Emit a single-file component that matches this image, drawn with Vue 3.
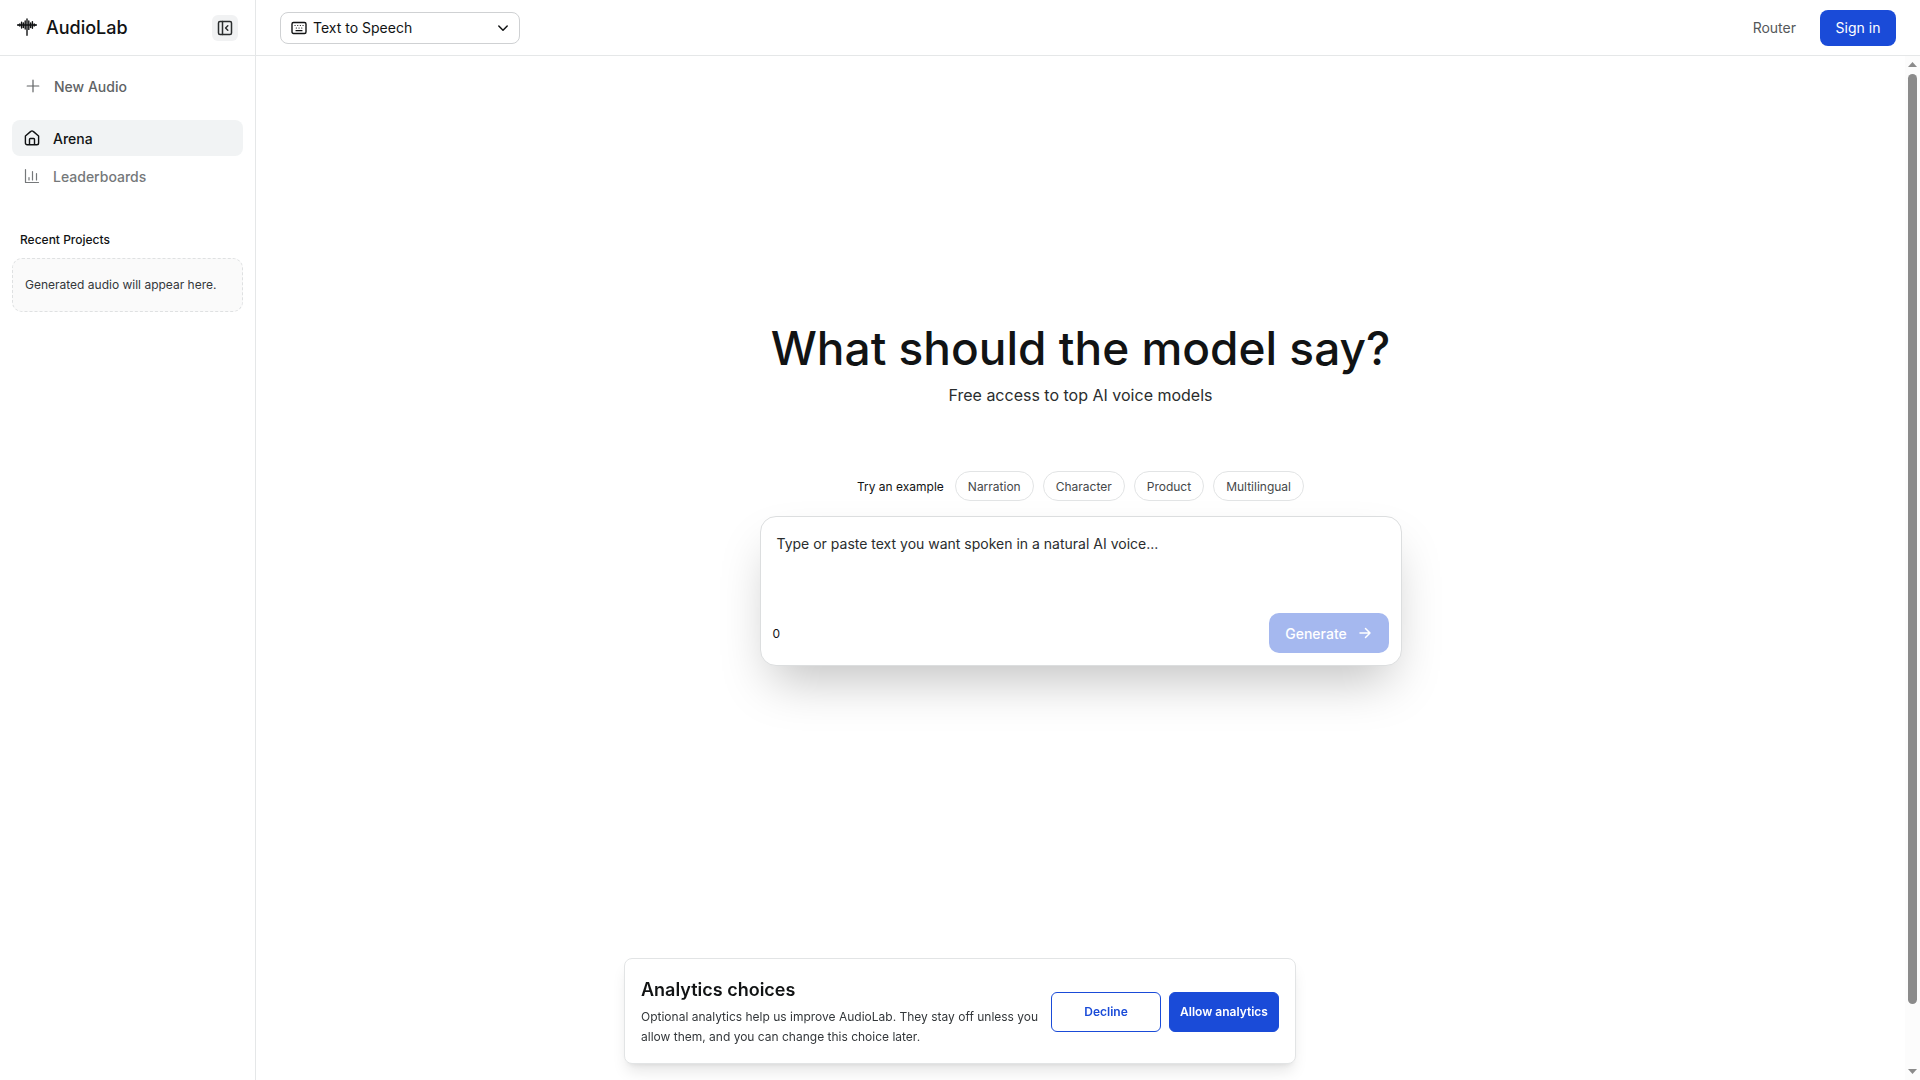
<script setup>
import { ref } from 'vue'

const mode = ref('tts')
const text = ref('')
const examples = ['Narration', 'Character', 'Product', 'Multilingual']
</script>

<template>
  <div class="app">
    <aside class="sidebar">
      <div class="brand-row">
        <a class="brand" href="#">
          <svg class="logo" width="20" height="20" viewBox="0 0 20 20" fill="none" stroke="currentColor" stroke-width="1.4" stroke-linecap="round" aria-hidden="true">
            <path d="M1 6.800v.4M2.800 6v2M4.600 4.300v5.800M6.400 5v4.600M8.200 3v8M10 1v16.200M11.800 3v8.400M13.600 5v4.600M15.400 3.600v6.600M17.200 6v2M19 6.800v.4" />
            <path d="M1 7h18" stroke-width="1.400" />
          </svg>
          <span>AudioLab</span>
        </a>
        <button class="collapse" type="button" aria-label="Collapse sidebar">
          <svg width="16" height="16" viewBox="0 0 16 16" fill="none" stroke="currentColor" stroke-width="1.5" stroke-linecap="round" stroke-linejoin="round">
            <rect x="1.5" y="1.5" width="13" height="13" rx="1.5" />
            <path d="M5.5 1.5v13M10.8 5.8L8.6 8l2.2 2.2" />
          </svg>
        </button>
      </div>

      <div class="sidebar-body">
        <a class="nav-item new" href="#">
          <svg width="16" height="16" viewBox="0 0 16 16" fill="none" stroke="currentColor" stroke-width="1.2" stroke-linecap="round"><path d="M8 2.2v11.6M2.2 8h11.6" /></svg>
          New Audio
        </a>
        <nav>
          <a class="nav-item active" href="#">
            <svg width="16" height="16" viewBox="0 0 16 16" fill="none" stroke="currentColor" stroke-width="1.4" stroke-linejoin="round"><path d="M1.400 6 6.800 1.400a1.800 1.800 0 0 1 2.400 0L14.600 6V13a1.800 1.800 0 0 1-1.800 1.800H3.200A1.800 1.800 0 0 1 1.400 13z" /><path d="M5.500 14.800V9.300a.8.8 0 0 1 .8-.8h3.400a.8.8 0 0 1 .8.8v5.500" /></svg>
            Arena
          </a>
          <a class="nav-item" href="#">
            <svg width="16" height="16" viewBox="0 0 16 16" fill="none" stroke="currentColor" stroke-width="1.2" stroke-linecap="round" stroke-linejoin="round"><path d="M1.500 1.500v13h13M5 12V9.500M8.500 12V3.500M12.500 12V5.500" /></svg>
            Leaderboards
          </a>
        </nav>
        <h2>Recent Projects</h2>
        <p class="empty">Generated audio will appear here.</p>
      </div>
    </aside>

    <div class="content">
      <header>
        <div class="mode">
          <svg class="mode-icon" width="16" height="16" viewBox="0 0 16 16" fill="none" stroke="currentColor" stroke-width="1.4" stroke-linecap="round" aria-hidden="true">
            <rect x="1" y="2.500" width="14" height="11" rx="1.500" />
            <path d="M4 5.500h.1M6.700 5.500h.1M9.300 5.500h.1M12 5.500h.1M5.300 8h.1M8 8h.1M10.700 8h.1" stroke-width="1.200" />
            <path d="M5 10.700h6" stroke-width="1.200" />
          </svg>
          <select v-model="mode" aria-label="Mode">
            <option value="tts">Text to Speech</option>
          </select>
          <svg class="chevron" width="12" height="12" viewBox="0 0 12 12" fill="none" stroke="currentColor" stroke-width="1.500" stroke-linecap="round" stroke-linejoin="round" aria-hidden="true"><path d="M1.800 4 6 8.200 10.200 4" /></svg>
        </div>
        <div class="account">
          <a href="#">Router</a>
          <button class="primary" type="button">Sign in</button>
        </div>
      </header>

      <div class="scroller">
        <main>
          <h1>What should the model say?</h1>
          <p class="subtitle">Free access to top AI voice models</p>
          <div class="examples">
            <span>Try an example</span>
            <button v-for="e in examples" :key="e" type="button">{{ e }}</button>
          </div>
          <form class="composer" @submit.prevent>
            <textarea v-model="text" aria-label="Text to speak" placeholder="Type or paste text you want spoken in a natural AI voice..."></textarea>
            <div class="composer-foot">
              <span>{{ text.length }}</span>
              <button type="submit" :disabled="!text">
                Generate
                <svg width="14" height="14" viewBox="0 0 14 14" fill="none" stroke="currentColor" stroke-width="1.500" stroke-linecap="round" stroke-linejoin="round"><path d="M2 7h10M7.500 2.500 12 7l-4.500 4.500" /></svg>
              </button>
            </div>
          </form>
        </main>
        <div class="scrollbar" aria-hidden="true">
          <svg width="9" height="5" viewBox="0 0 9 5"><path d="M0 5 4.500 0 9 5z" fill="#8b8b8b" /></svg>
          <div class="track"><div class="thumb"></div><div class="rest"></div></div>
          <svg width="9" height="5" viewBox="0 0 9 5"><path d="M0 0 4.500 5 9 0z" fill="#8b8b8b" /></svg>
        </div>
      </div>
    </div>

    <section class="consent" aria-labelledby="consent-title">
      <div class="consent-copy">
        <h2 id="consent-title">Analytics choices</h2>
        <p>Optional analytics help us improve AudioLab. They stay off unless you allow them, and you can change this choice later.</p>
      </div>
      <button class="outline" type="button">Decline</button>
      <button class="filled" type="button">Allow analytics</button>
    </section>
  </div>
</template>

<style>
body {
  margin: 0;
  background: #fff;
}
</style>

<style scoped>
.app {
  display: flex;
  height: 100vh;
  font-family: Inter, "Liberation Sans", sans-serif;
  font-size: 14px;
  color: #111314;
  overflow: hidden;
}
.app * {
  box-sizing: border-box;
}
svg {
  display: block;
  flex: none;
}
h1, h2, p {
  margin: 0;
}
button, select, textarea {
  font: inherit;
  margin: 0;
}
button {
  cursor: pointer;
}
a {
  color: inherit;
  text-decoration: none;
}

.sidebar {
  flex: none;
  width: 256px;
  border-right: 1px solid #e5e7e8;
}
.brand-row {
  display: flex;
  align-items: center;
  justify-content: space-between;
  height: 56px;
  padding: 0 17px;
  border-bottom: 1px solid #e5e7e8;
}
.brand {
  display: flex;
  align-items: center;
  gap: 9px;
  font-size: 18px;
  line-height: 24px;
  font-weight: 500;
}
.collapse {
  display: grid;
  place-items: center;
  width: 26px;
  height: 26px;
  padding: 0;
  border: 0;
  border-radius: 6px;
  background: #f1f2f3;
  color: #2a2d2e;
}
.sidebar-body {
  padding: 12px;
}
.nav-item {
  display: flex;
  align-items: center;
  gap: 13px;
  height: 36px;
  padding: 0 12px;
  border-radius: 8px;
  color: #75787a;
  font-weight: 500;
}
.new {
  padding: 0 13px;
  color: #606365;
}
nav {
  display: flex;
  flex-direction: column;
  gap: 2px;
  margin-top: 16px;
}
.active {
  background: #f1f3f4;
  color: #111314;
}
.sidebar h2 {
  margin: 37px 8px 9px;
  font-size: 12px;
  line-height: 18px;
  font-weight: 500;
}
.empty {
  padding: 16px 12px;
  border: 1px dashed #dfe1e2;
  border-radius: 10px;
  background: #fafafa;
  font-size: 12px;
  line-height: 20px;
  color: #33373a;
}

.content {
  flex: 1;
  min-width: 0;
  display: flex;
  flex-direction: column;
}
header {
  flex: none;
  display: flex;
  align-items: center;
  justify-content: space-between;
  height: 56px;
  padding: 0 24px;
  border-bottom: 1px solid #e5e7e8;
}
.mode {
  position: relative;
  width: 240px;
}
.mode select {
  display: block;
  appearance: none;
  width: 100%;
  height: 32px;
  padding: 0 32px;
  border: 1px solid #cfd1d3;
  border-radius: 8px;
  background: #fff;
  color: #111314;
}
.mode-icon, .chevron {
  position: absolute;
  top: 50%;
  transform: translateY(-50%);
  pointer-events: none;
}
.mode-icon {
  left: 11px;
}
.chevron {
  right: 11px;
}
.account {
  display: flex;
  align-items: center;
  gap: 24px;
  color: #55585a;
}
.primary {
  width: 76px;
  height: 36px;
  padding: 0;
  border: 0;
  border-radius: 8px;
  background: #1a4bd8;
  color: #fff;
}

.scroller {
  flex: 1;
  min-height: 0;
  display: flex;
}
main {
  flex: 1;
  display: flex;
  flex-direction: column;
  align-items: center;
  padding-top: 260px;
}
h1 {
  font-size: 46px;
  line-height: 64px;
  font-weight: 500;
}
.subtitle {
  margin-top: 3px;
  font-size: 16px;
  line-height: 24px;
  color: #2a2d2e;
}
.examples {
  display: flex;
  align-items: center;
  gap: 9px;
  margin-top: 64px;
  font-size: 12px;
}
.examples span {
  margin-right: 2px;
}
.examples button {
  height: 30px;
  padding: 0 12px;
  border: 1px solid #e2e4e5;
  border-radius: 15px;
  background: #fff;
  color: #45484a;
}
.composer {
  width: 642px;
  max-width: 100%;
  margin-top: 15px;
  padding: 12px;
  border: 1px solid #dcdedf;
  border-radius: 16px;
  background: #fff;
  box-shadow: 0 25px 50px -12px rgba(0, 0, 0, 0.25);
}
.composer textarea {
  display: block;
  width: 100%;
  height: 84px;
  padding: 4px;
  border: 0;
  outline: 0;
  resize: none;
  background: transparent;
  line-height: 22px;
  color: #111314;
}
.composer textarea::placeholder {
  color: #2a2d2e;
  opacity: 1;
}
.composer-foot {
  display: flex;
  align-items: center;
  justify-content: space-between;
  font-size: 12px;
}
.composer-foot button {
  display: flex;
  align-items: center;
  justify-content: center;
  gap: 11px;
  width: 120px;
  height: 40px;
  padding: 0;
  border: 0;
  border-radius: 10px;
  background: #1a4bd8;
  color: #fff;
  font-size: 14px;
  font-weight: 500;
}
.composer-foot button:disabled {
  background: #a5b8ef;
}

.scrollbar {
  flex: none;
  display: flex;
  flex-direction: column;
  align-items: center;
  width: 15px;
  padding: 6px 0;
  background: #fcfcfc;
}
.track {
  flex: 1;
  display: flex;
  flex-direction: column;
  width: 9px;
  margin: 7px 0 6px;
}
.thumb {
  flex: 94;
  border-radius: 5px;
  background: #8b8b8b;
}
.rest {
  flex: 6;
}

.consent {
  position: fixed;
  bottom: 16px;
  left: 50%;
  transform: translateX(-50%);
  display: flex;
  align-items: center;
  gap: 8px;
  width: 672px;
  padding: 17px 16px 16px;
  border: 1px solid #e2e4e5;
  border-radius: 8px;
  background: #fff;
  box-shadow: 0 10px 15px -3px rgba(0, 0, 0, 0.1), 0 4px 6px -4px rgba(0, 0, 0, 0.1);
}
.consent-copy {
  flex: 1;
}
.consent h2 {
  font-size: 18px;
  line-height: 28px;
  font-weight: 600;
}
.consent p {
  margin-top: 3px;
  font-size: 12px;
  line-height: 20px;
  color: #33373a;
}
.consent button {
  flex: none;
  width: 110px;
  height: 40px;
  padding: 0;
  border: 1px solid #1a4bd8;
  border-radius: 6px;
  font-size: 12px;
  font-weight: 600;
}
.consent .outline {
  background: #fff;
  color: #1a4bd8;
}
.consent .filled {
  background: #1a4bd8;
  color: #fff;
}
</style>
